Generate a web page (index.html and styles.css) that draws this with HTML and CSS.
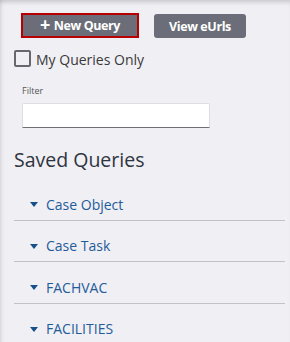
FILE: index.html
```html
<!DOCTYPE html>
<html>
<head>
<meta charset="utf-8">
<link rel="stylesheet" href="styles.css">
</head>
<body>
<div class="page">
  <div class="actions">
    <button class="btn btn-primary"><span class="plus">+</span> New Query</button>
    <button class="btn">View eUrls</button>
  </div>
  <label class="check-row">
    <span class="checkbox"></span>
    <span class="check-label">My Queries Only</span>
  </label>
  <div class="filter">
    <div class="filter-label">Filter</div>
    <div class="filter-input"></div>
  </div>
  <h2 class="title">Saved Queries</h2>
  <ul class="list">
    <li class="item"><span class="caret"></span>Case Object</li>
    <li class="item"><span class="caret"></span>Case Task</li>
    <li class="item"><span class="caret"></span>FACHVAC</li>
    <li class="item"><span class="caret"></span>FACILITIES</li>
  </ul>
</div>
</body>
</html>
```
FILE: styles.css
```css
html, body {
  margin: 0;
  padding: 0;
  height: 100%;
}
body {
  background: #f0eff4;
  font-family: "Open Sans", "Noto Sans", sans-serif;
  color: #333;
  box-shadow: inset 0 5px 5px -3px rgba(0,0,0,0.18), inset 5px 0 4px -4px rgba(0,0,0,0.12);
  overflow: hidden;
}
.page {
  padding: 13px 5px 0 14px;
}
.actions {
  display: flex;
  align-items: flex-start;
  gap: 15px;
  margin-left: 7px;
}
.btn {
  font-family: "Open Sans", sans-serif;
  font-weight: 700;
  font-size: 12.5px;
  color: #fff;
  background: #6b6e79;
  border: none;
  border-radius: 3px;
  height: 24px;
  width: 92px;
  padding: 0;
  margin-top: 1px;
  letter-spacing: -0.4px;
}
.btn-primary {
  width: 118px;
  height: 25px;
  margin-top: 0;
  border: 2px solid #b80000;
  border-radius: 0;
}
.plus {
  font-size: 18px;
  font-weight: 700;
  line-height: 10px;
  vertical-align: -1px;
  margin-right: 1px;
}
.check-row {
  display: flex;
  align-items: center;
  margin-top: 12px;
  height: 17px;
}
.checkbox {
  width: 13px;
  height: 13px;
  border: 2px solid #66686d;
  border-radius: 2px;
  background: #f0eff4;
}
.check-label {
  margin-left: 5px;
  font-size: 14px;
  color: #3a3a3a;
  position: relative;
  top: 1px;
}
.filter {
  margin-left: 8px;
  margin-top: 18px;
}
.filter-label {
  font-size: 9px;
  color: #555;
  line-height: 12px;
}
.filter-input {
  margin-top: 6px;
  width: 186px;
  height: 23px;
  background: #fff;
  border: 1px solid #dddde2;
  border-bottom: 1px solid #6f7075;
  border-radius: 2px 2px 0 0;
}
.title {
  font-size: 19.5px;
  font-weight: 400;
  margin: 18px 0 0 0;
  color: #2e3440;
  line-height: 27px;
}
.list {
  list-style: none;
  margin: 6px 0 0 0;
  padding: 0;
}
.item {
  display: flex;
  align-items: center;
  box-sizing: border-box;
  height: 41.5px;
  padding-top: 10px;
  border-bottom: 1px solid #c3c2c9;
  padding-left: 16px;
  font-size: 14px;
  line-height: 19px;
  color: #1e5c9a;
}
.caret {
  width: 0;
  height: 0;
  border-left: 4.5px solid transparent;
  border-right: 4.5px solid transparent;
  border-top: 5px solid #16508a;
  margin-right: 8px;
  margin-top: 1px;
}
```
